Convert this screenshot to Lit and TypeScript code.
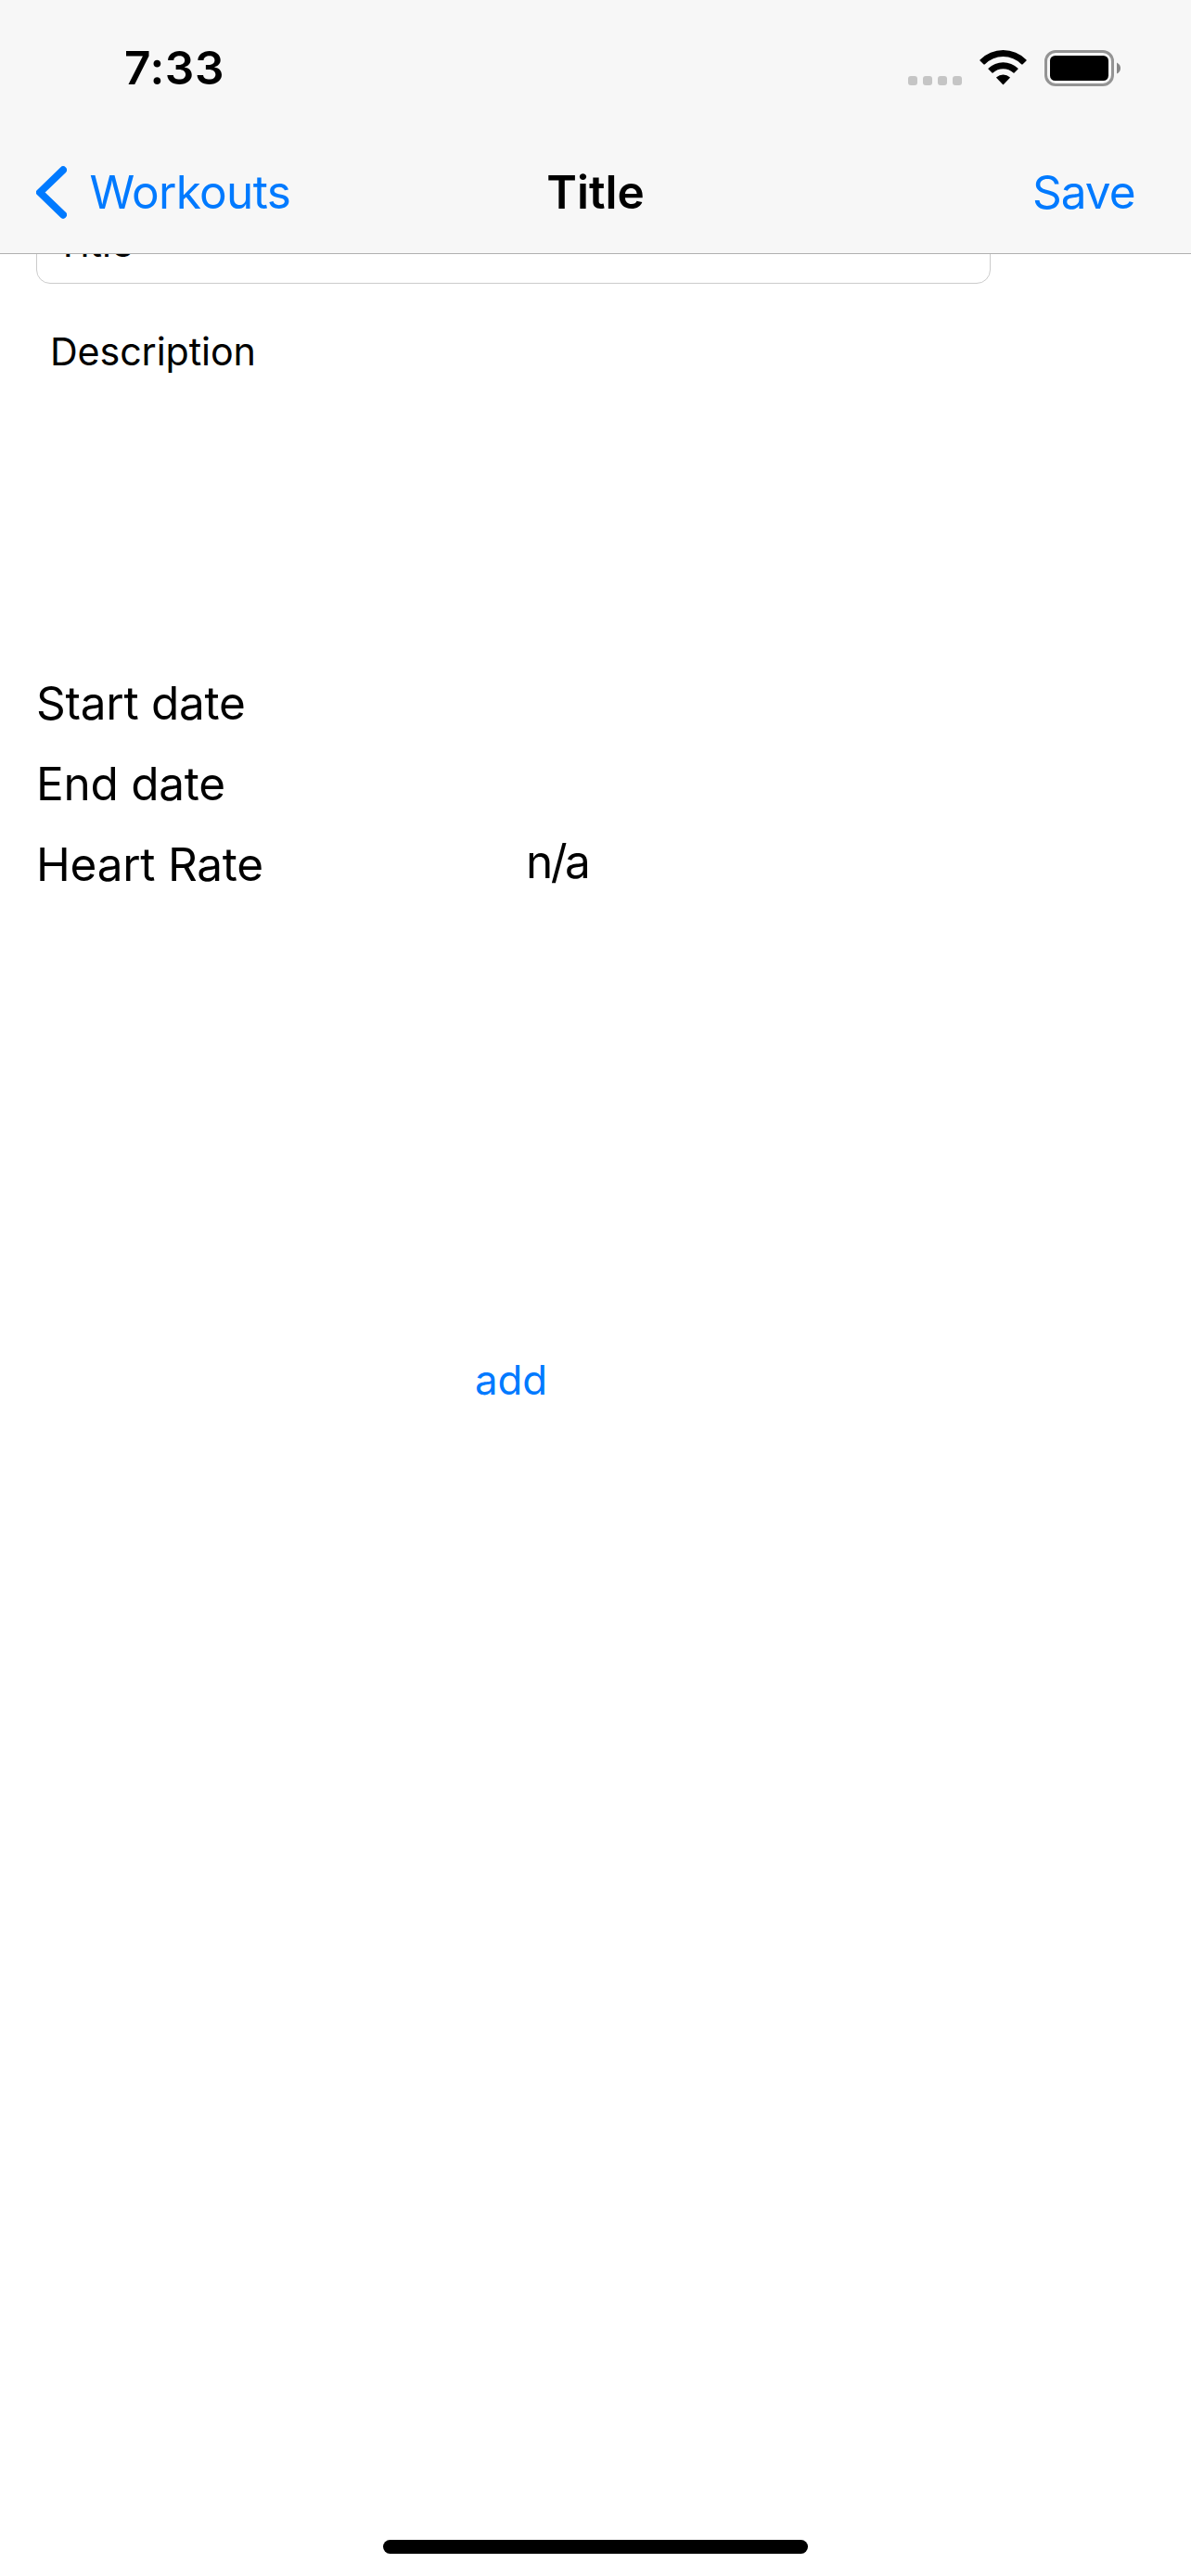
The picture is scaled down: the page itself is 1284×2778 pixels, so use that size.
import { LitElement, html, css, svg } from "lit";
import { customElement, property } from "lit/decorators.js";

const base = css`
  :host {
    box-sizing: border-box;
    font-family: Inter, "Liberation Sans", sans-serif;
    font-size: 49.5px;
    white-space: nowrap;
  }
  svg {
    display: block;
  }
`;

@customElement("status-bar")
class StatusBar extends LitElement {
  static styles = [
    base,
    css`
      :host {
        display: flex;
        align-items: center;
        justify-content: space-between;
        height: 141px;
        padding: 5px 76px 0 134px;
      }
      .time {
        font-weight: 600;
        letter-spacing: 0.6px;
      }
      .icons {
        display: flex;
        align-items: center;
      }
    `,
  ];

  render() {
    const dots = [0, 16, 32, 48].map(
      (x) => svg`<rect x=${x} y="28" width="10" height="10" rx="3" fill="#c5c5c5" />`
    );
    return html`
      <span class="time">7:33</span>
      <div class="icons">
        <svg width="229" height="39" viewBox="0 0 229 39">
          ${dots}
          <g transform="translate(102.5 36)">
            <path d="M-25 -25.5A35.3 35.3 0 0 1 25 -25.5Q25.4 -25 25 -24.6L20.9 -20.6Q20.4 -20.2 19.9 -20.6A28 28 0 0 0 -19.9 -20.6Q-20.4 -20.2 -20.9 -20.6L-25 -24.6Q-25.4 -25 -25 -25.5Z" />
            <path d="M-16 -16.3A23 23 0 0 1 16 -16.3Q16.4 -15.8 16 -15.4L12 -11.4Q11.5 -11 11 -11.4A16 16 0 0 0 -11 -11.4Q-11.5 -11 -12 -11.4L-16 -15.4Q-16.4 -15.8 -16 -16.3Z" />
            <path d="M-7.2 -6.8A11 11 0 0 1 7.2 -6.8Q7.6 -6.3 7.2 -5.9L.5 1.1Q0 1.5 -.5 1.1L-7.2 -5.9Q-7.6 -6.3 -7.2 -6.8Z" />
          </g>
          <rect x="148.5" y="1.5" width="72" height="36" rx="10.5" fill="none" stroke="#949494" stroke-width="3" />
          <rect x="153" y="6" width="63" height="27" rx="5.5" />
          <path d="M225 13.5Q229 15.5 229 19.5T225 25.5Z" fill="#868686" />
        </svg>
      </div>
    `;
  }
}

@customElement("nav-bar")
class NavBar extends LitElement {
  static styles = [
    base,
    css`
      :host {
        display: grid;
        grid-template-columns: 1fr auto 1fr;
        align-items: center;
        height: 133px;
        padding: 0 39px;
        border-bottom: 1px solid #b0b0b0;
      }
      .back {
        display: flex;
        align-items: center;
        gap: 24.5px;
        color: #007aff;
      }
      .label {
        letter-spacing: -0.7px;
      }
      .title {
        font-weight: 600;
        letter-spacing: 0;
      }
      .save {
        justify-self: end;
        margin-right: 21.5px;
        color: #007aff;
        letter-spacing: -1px;
      }
    `,
  ];

  render() {
    return html`
      <div class="back">
        <svg width="33" height="57" viewBox="0 0 33 57">
          <path d="M29 4.3 4 28.5 29 52.7" fill="none" stroke="currentColor" stroke-width="8" stroke-linecap="round" stroke-linejoin="round" />
        </svg>
        <span class="label">Workouts</span>
      </div>
      <span class="title">Title</span>
      <span class="save">Save</span>
    `;
  }
}

@customElement("detail-row")
class DetailRow extends LitElement {
  @property() label = "";
  @property() value = "";

  static styles = [
    base,
    css`
      :host {
        display: grid;
        grid-template-columns: 528px 1fr;
        align-items: center;
        height: 87px;
      }
      .label {
        letter-spacing: -0.25px;
      }
      .value {
        padding-bottom: 6px;
        letter-spacing: -2.6px;
      }
    `,
  ];

  render() {
    return html`
      <span class="label">${this.label}</span>
      <span class="value">${this.value}</span>
    `;
  }
}

@customElement("app-root")
class AppRoot extends LitElement {
  static styles = [
    base,
    css`
      :host {
        display: flex;
        flex-direction: column;
        height: 2778px;
        background: #fff;
        color: #000;
      }
      .header {
        flex: none;
        background: #f7f7f7;
      }
      .content {
        flex: 1;
        display: flex;
        flex-direction: column;
        align-items: flex-start;
        overflow: hidden;
        padding-left: 39px;
      }
      .field {
        flex: none;
        box-sizing: border-box;
        width: 1029px;
        height: 102px;
        margin-top: -70px;
        padding: 5px 0 0 20px;
        border: 1px solid #cbcbcb;
        border-radius: 15px;
        font-size: 41.2px;
        line-height: 104px;
      }
      .description {
        flex: none;
        box-sizing: border-box;
        height: 408px;
        padding: 48px 0 0 15px;
        font-size: 41.2px;
        line-height: 50px;
        letter-spacing: -0.1px;
      }
      .details {
        width: 100%;
      }
      .add {
        margin: 479px 0 0 473px;
        color: #007aff;
        font-size: 43.7px;
        line-height: 70px;
      }
      .home {
        align-self: center;
        width: 458px;
        height: 15px;
        margin-bottom: 24px;
        border-radius: 8px;
        background: #000;
      }
    `,
  ];

  render() {
    return html`
      <div class="header">
        <status-bar></status-bar>
        <nav-bar></nav-bar>
      </div>
      <div class="content">
        <div class="field">Title</div>
        <div class="description">Description</div>
        <div class="details">
          <detail-row label="Start date"></detail-row>
          <detail-row label="End date"></detail-row>
          <detail-row label="Heart Rate" value="n/a"></detail-row>
        </div>
        <div class="add">add</div>
      </div>
      <div class="home"></div>
    `;
  }
}
